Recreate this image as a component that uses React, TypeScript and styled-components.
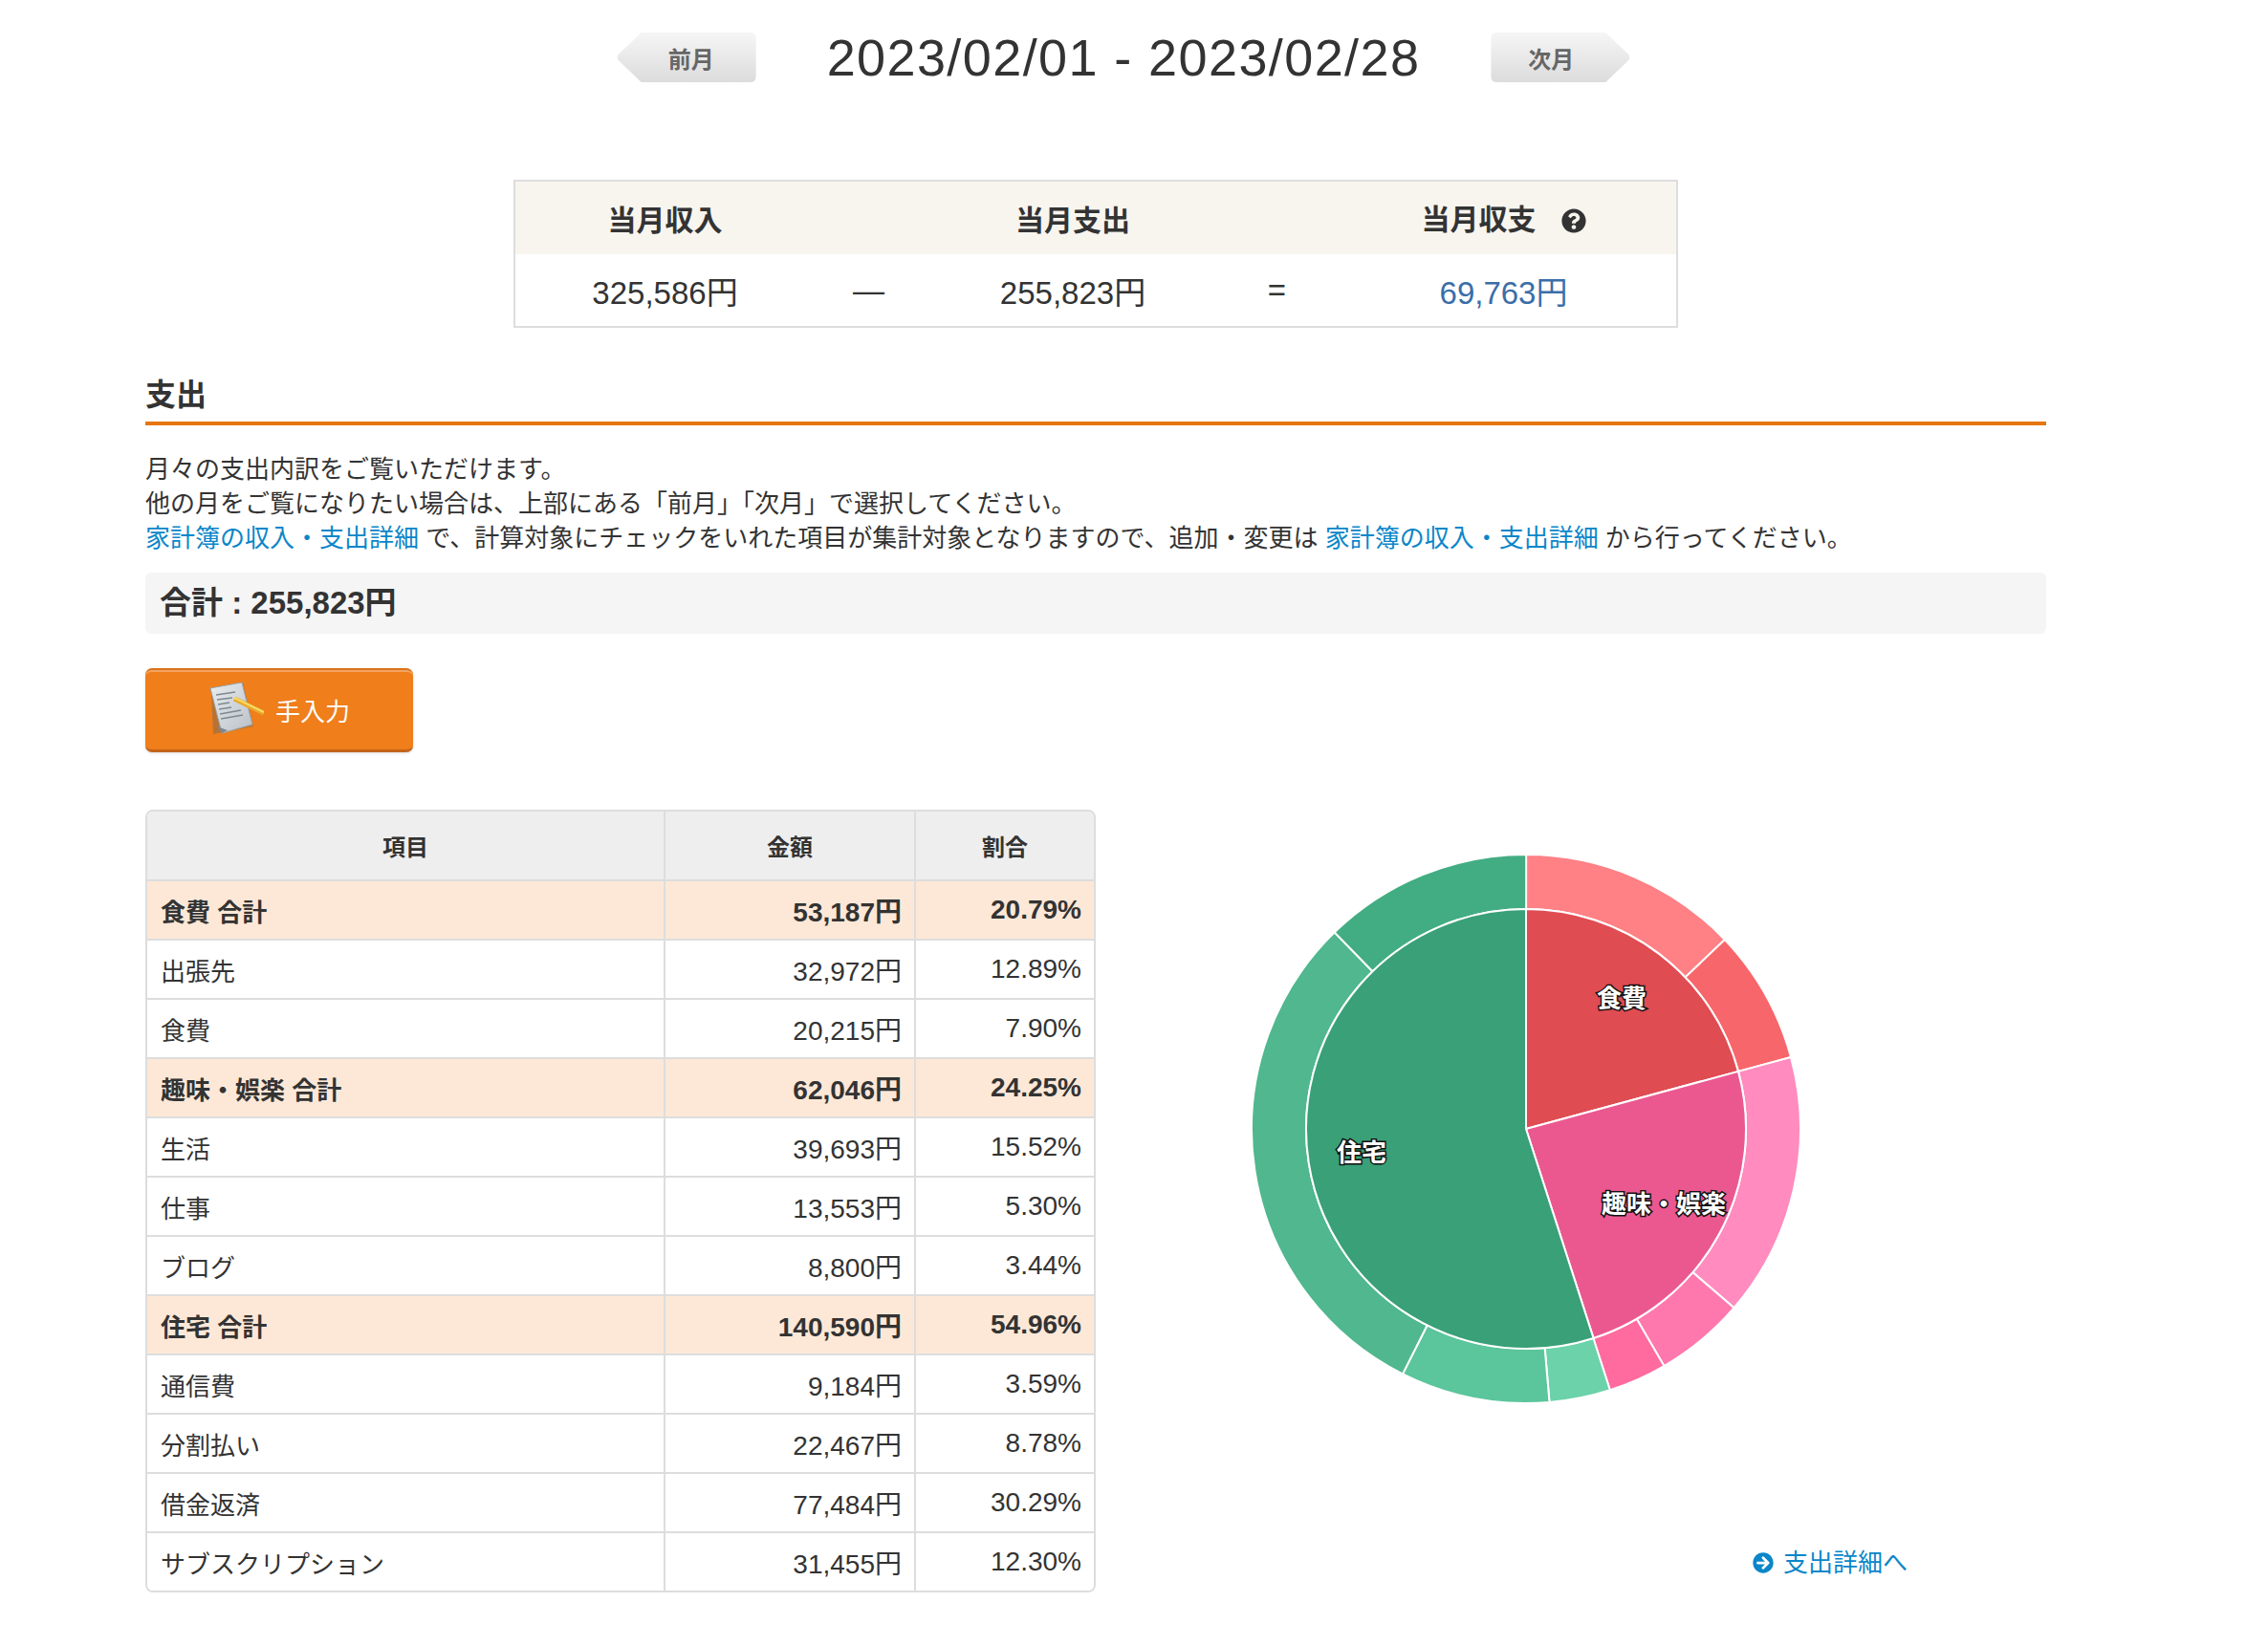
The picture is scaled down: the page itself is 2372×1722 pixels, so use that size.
import styled, { createGlobalStyle } from "styled-components";
import { FaArrowCircleRight, FaQuestionCircle } from "react-icons/fa";

type Item = { name: string; amount: string; rate: string; percent: number; color: string };
type Group = {
  name: string;
  amount: string;
  rate: string;
  percent: number;
  color: string;
  labelX: number;
  labelY: number;
  items: Item[];
};

const groups: Group[] = [
  {
    name: "食費",
    amount: "53,187円",
    rate: "20.79%",
    percent: 20.79,
    color: "#df4c52",
    labelX: 420,
    labelY: 184,
    items: [
      { name: "出張先", amount: "32,972円", rate: "12.89%", percent: 12.89, color: "#ff8085" },
      { name: "食費", amount: "20,215円", rate: "7.90%", percent: 7.9, color: "#f7666b" },
    ],
  },
  {
    name: "趣味・娯楽",
    amount: "62,046円",
    rate: "24.25%",
    percent: 24.25,
    color: "#eb5890",
    labelX: 464,
    labelY: 399,
    items: [
      { name: "生活", amount: "39,693円", rate: "15.52%", percent: 15.52, color: "#ff8bbf" },
      { name: "仕事", amount: "13,553円", rate: "5.30%", percent: 5.3, color: "#ff78ad" },
      { name: "ブログ", amount: "8,800円", rate: "3.44%", percent: 3.44, color: "#ff6a9f" },
    ],
  },
  {
    name: "住宅",
    amount: "140,590円",
    rate: "54.96%",
    percent: 54.96,
    color: "#39a077",
    labelX: 148,
    labelY: 345,
    items: [
      { name: "通信費", amount: "9,184円", rate: "3.59%", percent: 3.59, color: "#6bd2aa" },
      { name: "分割払い", amount: "22,467円", rate: "8.78%", percent: 8.78, color: "#5bc59b" },
      { name: "借金返済", amount: "77,484円", rate: "30.29%", percent: 30.29, color: "#50b78e" },
      { name: "サブスクリプション", amount: "31,455円", rate: "12.30%", percent: 12.3, color: "#42ad82" },
    ],
  },
];

const CENTER = 320;
const INNER_R = 230;
const OUTER_R = 287;

function point(r: number, pct: number) {
  const a = (pct / 100) * Math.PI * 2;
  return `${CENTER + r * Math.sin(a)} ${CENTER - r * Math.cos(a)}`;
}

function slicePath(r0: number, r1: number, from: number, to: number) {
  const large = to - from > 50 ? 1 : 0;
  if (r0 === 0) {
    return `M${CENTER} ${CENTER} L${point(r1, from)} A${r1} ${r1} 0 ${large} 1 ${point(r1, to)} Z`;
  }
  return `M${point(r0, from)} L${point(r1, from)} A${r1} ${r1} 0 ${large} 1 ${point(r1, to)} L${point(r0, to)} A${r0} ${r0} 0 ${large} 0 ${point(r0, from)} Z`;
}

function Pie() {
  let groupAt = 0;
  let itemAt = 0;
  return (
    <ChartSvg viewBox="0 0 640 640" width="640" height="640">
      {groups.map((g) => {
        const from = groupAt;
        groupAt += g.percent;
        return (
          <g key={g.name}>
            {g.items.map((item) => {
              const start = itemAt;
              itemAt += item.percent;
              return (
                <path
                  key={item.name}
                  d={slicePath(INNER_R, OUTER_R, start, itemAt)}
                  fill={item.color}
                  stroke="#fff"
                  strokeWidth="2"
                />
              );
            })}
            <path d={slicePath(0, INNER_R, from, groupAt)} fill={g.color} stroke="#fff" strokeWidth="2" />
          </g>
        );
      })}
      {groups.map((g) => (
        <ChartLabel key={g.name} x={g.labelX} y={g.labelY} textAnchor="middle" dominantBaseline="central">
          {g.name}
        </ChartLabel>
      ))}
    </ChartSvg>
  );
}

function NoteIcon() {
  return (
    <svg width="58" height="58" viewBox="0 0 58 58">
      <defs>
        <linearGradient id="paper" x1="0" y1="0" x2="1" y2="1">
          <stop offset="0" stopColor="#e9edf0" />
          <stop offset="1" stopColor="#b9c0c6" />
        </linearGradient>
      </defs>
      <path d="M5 54 L3 8 L36 0 L47 46 Z" fill="#8a6a48" opacity="0.55" />
      <path d="M2 6 L35 0 L46 44 L14 53 Z" fill="url(#paper)" stroke="#9aa3a9" strokeWidth="1" />
      <path d="M14 53 L9 46 L20 50 Z" fill="#7d868c" />
      <g stroke="#7f888f" strokeWidth="1.6">
        <line x1="8" y1="13" x2="28" y2="10" />
        <line x1="9" y1="18" x2="25" y2="16" />
        <line x1="10" y1="23" x2="22" y2="21" />
        <line x1="11" y1="28" x2="24" y2="26" />
        <line x1="12" y1="33" x2="34" y2="29" />
        <line x1="13" y1="38" x2="36" y2="34" />
      </g>
      <path d="M27 17 L58 32" stroke="#e9a92a" strokeWidth="5" />
      <path d="M27 16 L58 31" stroke="#f7dc6a" strokeWidth="2" />
    </svg>
  );
}

const GlobalStyle = createGlobalStyle`
  body {
    margin: 0;
    background: #fff;
    color: #333;
    font-family: "Liberation Sans", "Noto Sans CJK JP", sans-serif;
  }
`;

export default function App() {
  return (
    <Page>
      <GlobalStyle />
      <DateNav>
        <PrevButton>前月</PrevButton>
        <DateTitle>2023/02/01 - 2023/02/28</DateTitle>
        <NextButton>次月</NextButton>
      </DateNav>

      <SummaryTable>
        <colgroup>
          <col width="314" />
          <col width="113" />
          <col width="314" />
          <col width="113" />
          <col />
        </colgroup>
        <thead>
          <tr>
            <SummaryHead>当月収入</SummaryHead>
            <SummaryHead />
            <SummaryHead>当月支出</SummaryHead>
            <SummaryHead />
            <SummaryHead>
              当月収支
              <HelpIcon>
                <FaQuestionCircle size={26} />
              </HelpIcon>
            </SummaryHead>
          </tr>
        </thead>
        <tbody>
          <tr>
            <SummaryCell>325,586円</SummaryCell>
            <SummaryCell>―</SummaryCell>
            <SummaryCell>255,823円</SummaryCell>
            <SummaryCell>=</SummaryCell>
            <SummaryCell $balance>69,763円</SummaryCell>
          </tr>
        </tbody>
      </SummaryTable>

      <SectionTitle>支出</SectionTitle>
      <Description>
        月々の支出内訳をご覧いただけます。
        <br />
        他の月をご覧になりたい場合は、上部にある「前月」「次月」で選択してください。
        <br />
        <TextLink href="#">家計簿の収入・支出詳細</TextLink> で、計算対象にチェックをいれた項目が集計対象となりますので、追加・変更は{" "}
        <TextLink href="#">家計簿の収入・支出詳細</TextLink> から行ってください。
      </Description>
      <TotalBar>合計 : 255,823円</TotalBar>
      <InputButton>
        <NoteIcon />
        手入力
      </InputButton>

      <Breakdown>
        <TableFrame>
          <DetailTable>
            <colgroup>
              <col width="540" />
              <col width="262" />
              <col />
            </colgroup>
            <thead>
              <tr>
                <HeadCell>項目</HeadCell>
                <HeadCell>金額</HeadCell>
                <HeadCell>割合</HeadCell>
              </tr>
            </thead>
            <tbody>
              {groups.map((g) => (
                <GroupRows key={g.name} group={g} />
              ))}
            </tbody>
          </DetailTable>
        </TableFrame>
        <ChartPanel>
          <Pie />
          <DetailLink href="#">
            <FaArrowCircleRight size={22} />
            支出詳細へ
          </DetailLink>
        </ChartPanel>
      </Breakdown>
    </Page>
  );
}

function GroupRows({ group }: { group: Group }) {
  return (
    <>
      <tr>
        <NameCell $total>{group.name} 合計</NameCell>
        <ValueCell $total>{group.amount}</ValueCell>
        <ValueCell $total>{group.rate}</ValueCell>
      </tr>
      {group.items.map((item) => (
        <tr key={item.name}>
          <NameCell>{item.name}</NameCell>
          <ValueCell>{item.amount}</ValueCell>
          <ValueCell>{item.rate}</ValueCell>
        </tr>
      ))}
    </>
  );
}

const Page = styled.div`
  width: 1988px;
  padding: 34px 0 40px 152px;
`;
const DateNav = styled.div`
  display: flex;
  align-items: center;
  justify-content: center;
  gap: 74px;
  height: 52px;
  padding-left: 58px;
`;
const NavButton = styled.button`
  width: 146px;
  height: 52px;
  border: none;
  background: linear-gradient(#f6f6f6, #dcdcdc);
  color: #666;
  font-family: inherit;
  font-size: 24px;
  font-weight: 700;
  text-align: left;
  flex: none;
`;
const PrevButton = styled(NavButton)`
  padding: 0 0 0 54px;
  clip-path: path("M26 0 H140 Q146 0 146 6 V46 Q146 52 140 52 H26 L2 29 Q0 26 2 23 Z");
`;
const NextButton = styled(NavButton)`
  padding: 0 0 0 39px;
  clip-path: path("M6 0 H120 L144 23 Q146 26 144 29 L120 52 H6 Q0 52 0 46 V6 Q0 0 6 0 Z");
`;
const DateTitle = styled.div`
  font-size: 54px;
  letter-spacing: 1.4px;
  color: #333;
  white-space: nowrap;
`;
const SummaryTable = styled.table`
  width: 1218px;
  margin: 102px 0 0 385px;
  border: 2px solid #ddd;
  border-collapse: collapse;
  table-layout: fixed;
`;
const SummaryHead = styled.th`
  height: 76px;
  padding: 0;
  background: #f8f5ef;
  font-size: 30px;
  font-weight: 700;
  color: #333;
`;
const HelpIcon = styled.span`
  display: inline-block;
  margin-left: 26px;
  vertical-align: -4px;
  color: #333;
`;
const SummaryCell = styled.td<{ $balance?: boolean }>`
  height: 75px;
  padding: 0;
  text-align: center;
  font-size: 33px;
  color: ${(p) => (p.$balance ? "#3b6ea8" : "#333")};
`;
const SectionTitle = styled.h2`
  margin: 50px 0 0;
  height: 48px;
  line-height: 40px;
  font-size: 32px;
  font-weight: 700;
  color: #333;
  border-bottom: 4px solid #e6760f;
`;
const Description = styled.p`
  margin: 28px 0 0;
  font-size: 26px;
  line-height: 36px;
  color: #333;
  white-space: nowrap;
`;
const TextLink = styled.a`
  color: #0a86c9;
  text-decoration: none;
`;
const TotalBar = styled.div`
  margin-top: 18px;
  height: 64px;
  line-height: 64px;
  padding-left: 15px;
  background: #f5f5f5;
  border-radius: 6px;
  font-size: 33px;
  font-weight: 700;
  color: #333;
`;
const InputButton = styled.button`
  display: flex;
  align-items: center;
  justify-content: center;
  gap: 12px;
  width: 280px;
  height: 88px;
  margin-top: 36px;
  padding: 0;
  background: #ef7e1b;
  border: none;
  border-top: 2px solid #d9731a;
  border-bottom: 3px solid #c4641a;
  border-radius: 7px;
  box-shadow: inset 0 2px 0 #f4a362, 0 1px 3px rgba(0, 0, 0, 0.15);
  color: #fff;
  font-family: inherit;
  font-size: 26px;
`;
const Breakdown = styled.div`
  display: flex;
  margin-top: 60px;
`;
const TableFrame = styled.div`
  flex: none;
  width: 990px;
  border: 2px solid #ddd;
  border-radius: 8px;
  overflow: hidden;
`;
const DetailTable = styled.table`
  width: 100%;
  border-collapse: separate;
  border-spacing: 0;
  table-layout: fixed;
`;
const HeadCell = styled.th`
  height: 71px;
  padding: 0;
  background: #eee;
  font-size: 24px;
  font-weight: 700;
  color: #333;
  & + & {
    border-left: 2px solid #ddd;
  }
`;
const NameCell = styled.td<{ $total?: boolean }>`
  height: 60px;
  padding: 0 0 0 14px;
  border-top: 2px solid #ddd;
  background: ${(p) => (p.$total ? "#fde8d7" : "#fff")};
  font-size: 26px;
  font-weight: ${(p) => (p.$total ? 700 : 400)};
  color: #333;
  white-space: nowrap;
`;
const ValueCell = styled.td<{ $total?: boolean }>`
  height: 60px;
  padding: 0 13px 0 0;
  border-top: 2px solid #ddd;
  border-left: 2px solid #ddd;
  background: ${(p) => (p.$total ? "#fde8d7" : "#fff")};
  font-size: 28px;
  font-weight: ${(p) => (p.$total ? 700 : 400)};
  color: #333;
  text-align: right;
`;
const ChartPanel = styled.div`
  flex: 1;
  display: flex;
  flex-direction: column;
  padding: 14px 0 0 130px;
`;
const ChartSvg = styled.svg`
  display: block;
`;
const ChartLabel = styled.text`
  font-size: 26px;
  font-weight: 700;
  fill: #fff;
  stroke: #111;
  stroke-width: 3px;
  paint-order: stroke;
`;
const DetailLink = styled.a`
  display: flex;
  align-items: center;
  gap: 10px;
  align-self: flex-end;
  margin: 116px 145px 0 0;
  color: #0a86c9;
  font-size: 26px;
  line-height: 36px;
  text-decoration: none;
`;
